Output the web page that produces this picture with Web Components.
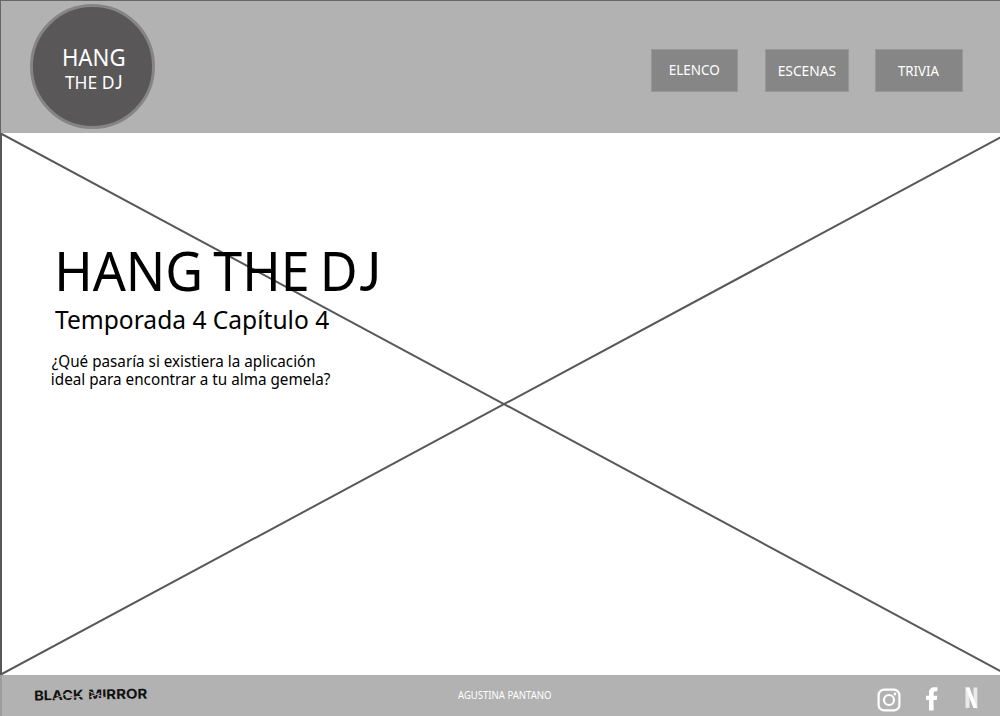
<!DOCTYPE html>
<html lang="es">
<head>
<meta charset="utf-8">
<title>Hang the DJ</title>
<style>
html,body{margin:0;height:100%;overflow:hidden;background:#fff;font-family:"Noto Sans","Open Sans",sans-serif}
</style>
</head>
<body>
<episode-page></episode-page>
<script>
const define = (name, html, setup) => {
  const template = document.createElement('template');
  template.innerHTML = html;
  customElements.define(name, class extends HTMLElement {
    constructor() {
      super();
      this.attachShadow({mode: 'open'}).append(template.content.cloneNode(true));
    }
    connectedCallback() { if (setup) setup(this, this.shadowRoot); }
  });
};

/* One line of text whose visible glyphs span the given width. */
define('fit-text', `<style>
:host{display:block;flex:none;white-space:nowrap}
span{display:inline-block;vertical-align:top;transform-origin:0 50%}
::slotted(i){font-family:Lato,sans-serif;font-style:normal;font-size:.98em;padding-left:.035em}
</style><span><slot></slot></span>`, (host, root) => {
  const [w, size, line] = ['w', 'size', 'line'].map(a => parseFloat(host.getAttribute(a)));
  host.style.cssText += `;width:${w}px;height:${line}px;font-size:${size}px;line-height:${line}px`;
  const span = root.querySelector('span');
  const ctx = document.createElement('canvas').getContext('2d');
  const measure = (ch, el) => {
    const cs = getComputedStyle(el);
    ctx.font = `${cs.fontWeight} ${size * 10}px ${cs.fontFamily}`;
    return ctx.measureText(ch);
  };
  const text = host.textContent;
  const first = measure(text[0], host);
  const last = measure(text.at(-1), host.querySelector('i') || host);
  const left = -first.actualBoundingBoxLeft / 10;
  const right = (last.width - last.actualBoundingBoxRight) / 10;
  const scale = w / (span.getBoundingClientRect().width - left - right);
  span.style.transform = `translateX(${-left * scale}px) scaleX(${scale})`;
});

define('round-logo', `
<style>
:host{box-sizing:border-box;width:125px;height:125px;border:3px solid #858585;border-radius:50%;background:#595758;color:#fff;display:flex;flex-direction:column;align-items:center;padding-top:36px}
.b{margin-top:-1px;margin-left:1px}.a{margin-left:2px}
</style>
<fit-text class="a" w="60" size="23" line="28">HANG</fit-text>
<fit-text class="b" w="56" size="18.8" line="24">THE D<i>J</i></fit-text>`);

define('nav-button', `
<style>
:host{box-sizing:border-box;height:43px;display:flex;justify-content:center;align-items:flex-start;background:#868686;border:1px solid #979797;color:#fff;padding-top:8px}
</style><slot></slot>`);

define('site-header', `
<style>
:host{box-sizing:border-box;display:flex;height:133px;background:#b2b2b2;border-top:1px solid #666;border-left:1px solid #666;padding:3px 37px 0 29px;justify-content:space-between}
nav{display:flex;padding-top:45px;align-items:flex-start}
.e{width:87px;margin-right:27px}.s{width:84px;margin-right:26px;padding-top:9px}.t{width:88px;padding-top:9px}
.t fit-text{margin-left:-2px}
</style>
<round-logo></round-logo>
<nav>
<nav-button class="e"><fit-text w="49" size="14.8" line="22">ELENCO</fit-text></nav-button>
<nav-button class="s"><fit-text w="56.5" size="14.8" line="22">ESCENAS</fit-text></nav-button>
<nav-button class="t"><fit-text w="41" size="14.8" line="22">TRIVIA</fit-text></nav-button>
</nav>`);

define('hero-panel', `
<style>
:host{display:grid;height:542px;background:#fff;color:#000;overflow:hidden}
svg,section{grid-area:1/1}
svg{display:block}
section{padding:107px 0 0 52px}
h1,h2,p{margin:0;font-weight:400}
h1{padding-left:6.5px;word-spacing:-3.5px}h2{padding:4.4px 0 0 3px}p{padding-top:17.6px}
</style>
<svg width="1000" height="542" fill="none" stroke="#595758" stroke-width="2"><path d="M1 0V542M1 .5L1005 540.5M1 541.5L1005 2"/></svg>
<section>
<h1><fit-text w="318" size="55.5" line="60">HANG THE D<i>J</i></fit-text></h1>
<h2><fit-text w="274" size="25.8" line="30">Temporada 4 Capítulo 4</fit-text></h2>
<p><fit-text w="262.5" size="16" line="18">¿Qué pasaría si existiera la aplicación</fit-text>
<fit-text w="278" size="16" line="18">ideal para encontrar a tu alma gemela?</fit-text></p>
</section>`);

define('series-logo', `
<style>
:host{display:grid;width:116px;height:22px;color:#111;font-family:Inter,sans-serif;font-weight:700}
div,svg{grid-area:1/1}
div{display:flex;gap:6px}
.b{transform:rotate(-1deg);margin-left:.5px}
.m{transform:rotate(-1deg);margin-top:-1.5px}
svg{z-index:1}
</style>
<div><fit-text class="b" w="48.5" size="13.5" line="22">BLACK</fit-text><fit-text class="m" w="58.5" size="13.5" line="22">MIRROR</fit-text></div>
<svg width="116" height="22" fill="none" stroke="#b2b2b2"><path d="M20 15L34 9M32 14L50 12M54 7L72 14M56 13L66 9" stroke-width="1"/><path d="M54 17L72 14.5" stroke-width="2.4"/></svg>`);

define('social-links', `
<style>
:host{display:flex;align-items:flex-start;color:#fff}
svg{display:block;flex:none}
.f{margin:-1px 0 0 25px}.n{margin:-1px 0 0 27px}
</style>
<svg width="24" height="24" viewBox="0 0 24 24" fill="none" stroke="currentColor" stroke-width="2.2"><rect x="1.6" y="1.6" width="20.8" height="20.8" rx="5.5"/><circle cx="12" cy="12" r="5"/><circle cx="18" cy="6" r="1.4" fill="currentColor" stroke="none"/></svg>
<svg class="f" width="12" height="24" viewBox="0 0 12 24" fill="currentColor"><path d="M3 23.5V13H0V8.7H3V6C3 2.2 5 .3 8.3 .3H11.4V4.3H9.5C8 4.3 7.6 5 7.6 6.3V8.7H11.3L10.8 13H7.6V23.5Z"/></svg>
<svg class="n" width="13" height="22" viewBox="0 0 13 22"><path fill="#e9e9e9" d="M.5 .5H4.5V20.7L.5 21.3ZM8.5 .5H12.3V21.3L8.5 20.7Z"/><path fill="#fff" d="M.5 .5H4.5L12.3 21.3L8.3 20.8Z"/></svg>`);

define('site-footer', `
<style>
:host{box-sizing:border-box;display:grid;grid-template-columns:424px 1fr auto;height:41px;background:#b2b2b2;border-left:2px solid #9d9d9d;padding:9px 22px 0 32px;color:#fff}
fit-text{margin-top:3px}social-links{margin-top:4px}
</style>
<series-logo></series-logo>
<fit-text w="93" size="10.3" line="16">AGUSTINA PANTANO</fit-text>
<social-links></social-links>`);

define('episode-page', `
<style>:host{display:block;width:1000px;height:716px}</style>
<site-header></site-header><hero-panel></hero-panel><site-footer></site-footer>`);
</script>
</body>
</html>
